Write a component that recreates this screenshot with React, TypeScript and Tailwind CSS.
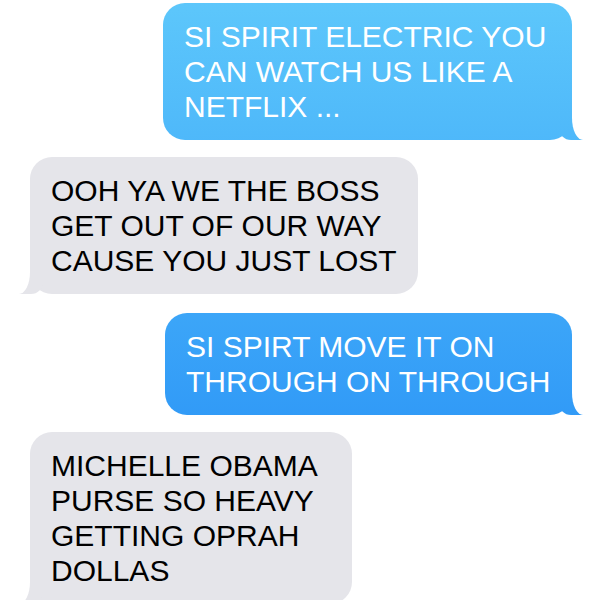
import React from "react";

type Msg = { from: "me" | "them"; lines: string[]; width: string; gap: string };

const messages: Msg[] = [
  { from: "me", lines: ["SI SPIRIT ELECTRIC YOU", "CAN WATCH US LIKE A", "NETFLIX ..."], width: "w-[409px]", gap: "mt-0" },
  { from: "them", lines: ["OOH YA WE THE BOSS", "GET OUT OF OUR WAY", "CAUSE YOU JUST LOST"], width: "w-[388px]", gap: "mt-[17px]" },
  { from: "me", lines: ["SI SPIRT MOVE IT ON", "THROUGH ON THROUGH"], width: "w-[407px]", gap: "mt-[19px]" },
  { from: "them", lines: ["MICHELLE OBAMA", "PURSE SO HEAVY", "GETTING OPRAH", "DOLLAS"], width: "w-[322px]", gap: "mt-[17px]" },
];

const Bubble = ({ msg }: { msg: Msg }) => {
  const mine = msg.from === "me";

  return (
    <div className={`flex ${mine ? "justify-end" : "justify-start"} ${msg.gap}`}>
      <div
        className={`relative ${msg.width} rounded-[22px] px-[21px] py-4 text-[30px] leading-[35px] whitespace-nowrap ${
          mine
            ? "bg-fixed bg-linear-to-b from-[#5dc7fb] to-[#1d86f4] text-white"
            : "bg-[#e5e5ea] text-black"
        }`}
      >
        {msg.lines.map((line, i) => (
          <div key={i}>{line}</div>
        ))}

        {/* tail */}
        {mine ? (
          <>
            <span className="absolute bottom-0 right-[-11px] h-[22px] w-[24px] rounded-bl-[12px] bg-fixed bg-linear-to-b from-[#5dc7fb] to-[#1d86f4]" />
            <span className="absolute bottom-0 left-full h-[23px] w-[20px] rounded-bl-[11px_22px] bg-white" />
          </>
        ) : (
          <>
            <span className="absolute bottom-0 left-[-11px] h-[22px] w-[24px] rounded-br-[12px] bg-[#e5e5ea]" />
            <span className="absolute bottom-0 right-full h-[23px] w-[20px] rounded-br-[11px_22px] bg-white" />
          </>
        )}
      </div>
    </div>
  );
};

export default function App() {
  return (
    <div
      className="h-screen w-full overflow-hidden bg-white pl-[30px] pr-[28px] pt-[3px]"
      style={{ fontFamily: '"Liberation Sans", Arial, sans-serif' }}
    >
      {messages.map((m, i) => (
        <Bubble key={i} msg={m} />
      ))}
    </div>
  );
}
